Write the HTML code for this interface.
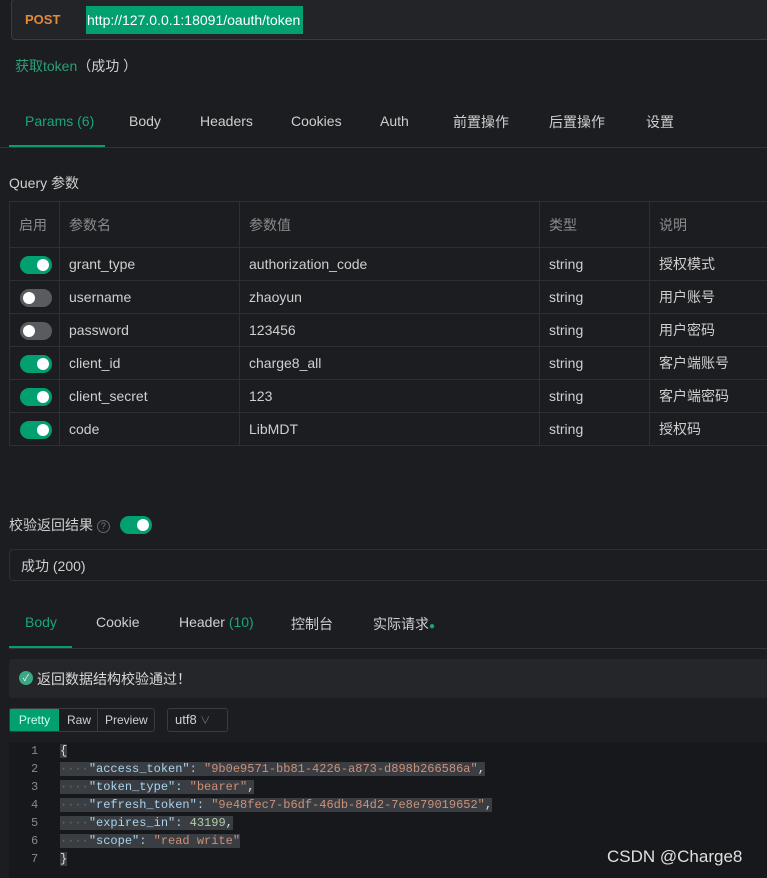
<!DOCTYPE html>
<html><head><meta charset="utf-8"><style>
*{box-sizing:border-box;margin:0;padding:0}
body{width:767px;height:878px;background:#1c1d21;color:#d0d0d0;font-family:"Liberation Sans","Noto Sans CJK SC",sans-serif;font-size:14px;position:relative;overflow:hidden}
.a{position:absolute;white-space:nowrap}
.url{left:11px;top:-1px;width:770px;height:41px;background:#232428;border:1px solid #3a3b3f;border-radius:4px}
.tog{position:absolute;width:32px;height:18px;border-radius:9px;background:#02a070}
.tog::after{content:"";position:absolute;top:3px;left:17px;width:12px;height:12px;border-radius:6px;background:#fff}
.tog.off{background:#5a5b5f}.tog.off::after{left:3px}
table{position:absolute;left:9px;top:201px;border-collapse:collapse;width:770px}
td{border:1px solid #2e2f33;height:33px;padding-left:9px;color:#cfcfcf;font-size:14px;position:relative}
tr.h td{height:46px;color:#8a8a8a}
.tab{position:absolute;top:113px;font-size:14px;color:#cfcfcf}
.code{font-family:"Liberation Mono",monospace;font-size:12px}
</style></head><body>
<div class="a url"></div>
<div class="a" style="left:25px;top:12px;color:#e08a3a;font-weight:bold;font-size:13px">POST</div>
<div class="a" style="left:86px;top:6px;height:28px;width:217px;background:#02a070;color:#fff;font-size:14px;line-height:28px;padding-left:1px">http://127.0.0.1:18091/oauth/token</div>
<div class="a" style="left:15px;top:56px;color:#2aa077">获取token<span style="color:#cfcfcf">（成功 ）</span></div>
<div class="tab" style="left:25px;color:#1aa57a">Params (6)</div>
<div class="tab" style="left:129px">Body</div>
<div class="tab" style="left:200px">Headers</div>
<div class="tab" style="left:291px">Cookies</div>
<div class="tab" style="left:380px">Auth</div>
<div class="tab" style="left:453px;top:112px">前置操作</div>
<div class="tab" style="left:549px;top:112px">后置操作</div>
<div class="tab" style="left:646px;top:112px">设置</div>
<div class="a" style="left:0;top:147px;width:767px;height:1px;background:#333438"></div>
<div class="a" style="left:9px;top:145px;width:96px;height:2px;background:#02a070"></div>
<div class="a" style="left:9px;top:173px;color:#cfcfcf">Query 参数</div>
<table>
<tr class="h"><td style="width:50px">启用</td><td style="width:180px">参数名</td><td style="width:300px">参数值</td><td style="width:110px">类型</td><td>说明</td></tr>
<tr><td><div class="tog" style="left:10px;top:8px"></div></td><td>grant_type</td><td>authorization_code</td><td>string</td><td>授权模式</td></tr>
<tr><td><div class="tog off" style="left:10px;top:8px"></div></td><td>username</td><td>zhaoyun</td><td>string</td><td>用户账号</td></tr>
<tr><td><div class="tog off" style="left:10px;top:8px"></div></td><td>password</td><td>123456</td><td>string</td><td>用户密码</td></tr>
<tr><td><div class="tog" style="left:10px;top:8px"></div></td><td>client_id</td><td>charge8_all</td><td>string</td><td>客户端账号</td></tr>
<tr><td><div class="tog" style="left:10px;top:8px"></div></td><td>client_secret</td><td>123</td><td>string</td><td>客户端密码</td></tr>
<tr><td><div class="tog" style="left:10px;top:8px"></div></td><td>code</td><td>LibMDT</td><td>string</td><td>授权码</td></tr>
</table>
<div class="a" style="left:9px;top:515px">校验返回结果 <span style="display:inline-block;width:13px;height:13px;border:1px solid #666;border-radius:7px;font-size:9px;color:#777;text-align:center;line-height:11px;vertical-align:1px">?</span></div>
<div class="tog" style="left:120px;top:516px;height:18px;width:32px"></div>
<div class="a" style="left:9px;top:549px;width:770px;height:32px;border:1px solid #2e2f33;border-radius:4px;padding:6px 11px;color:#cfcfcf">成功 (200)</div>
<div class="a" style="left:25px;top:614px;color:#1aa57a">Body</div>
<div class="a" style="left:96px;top:614px">Cookie</div>
<div class="a" style="left:179px;top:614px">Header <span style="color:#1aa57a">(10)</span></div>
<div class="a" style="left:291px;top:614px">控制台</div>
<div class="a" style="left:373px;top:614px">实际请求<span style="color:#1aa57a;font-size:10px">●</span></div>
<div class="a" style="left:9px;top:648px;width:767px;height:1px;background:#333438"></div>
<div class="a" style="left:9px;top:646px;width:63px;height:2px;background:#02a070"></div>
<div class="a" style="left:9px;top:659px;width:770px;height:39px;background:#25262a;border-radius:4px"></div>
<div class="a" style="left:19px;top:671px;width:14px;height:14px;border-radius:7px;background:#3aa884;color:#fff;font-size:9px;text-align:center;line-height:14px">✓</div>
<div class="a" style="left:37px;top:669px;color:#d8d8d8">返回数据结构校验通过！</div>
<div class="a" style="left:9px;top:708px;width:146px;height:24px;border:1px solid #3a3b3f;border-radius:3px;font-size:12px;line-height:22px">
<span style="position:absolute;left:0;top:0;width:49px;height:22px;background:#02a070;color:#cfe;text-align:center">Pretty</span>
<span style="position:absolute;left:57px">Raw</span><span style="position:absolute;left:87px;top:0;height:22px;border-left:1px solid #3a3b3f"></span><span style="position:absolute;left:95px">Preview</span></div>
<div class="a" style="left:167px;top:708px;width:61px;height:24px;border:1px solid #3a3b3f;border-radius:3px;font-size:13px;line-height:22px;padding-left:7px">utf8 <span style="color:#777;font-size:10px">∨</span></div>
<div class="a" style="left:9px;top:742px;width:770px;height:136px;background:#17181b"></div>
<div class="a code" style="left:31px;top:742px;color:#888;line-height:18px;text-align:right">1<br>2<br>3<br>4<br>5<br>6<br>7</div>
<div class="a code" style="left:60px;top:742px;line-height:18px;color:#a8d4f0">
<span style="background:#3a3d42;color:#ddd">{</span><br>
<span style="background:#3a3d42"><span style="color:#666">····</span>"access_token": <span style="color:#ce9178">"9b0e9571-bb81-4226-a873-d898b266586a"</span><span style="color:#ddd">,</span></span><br>
<span style="background:#3a3d42"><span style="color:#666">····</span>"token_type": <span style="color:#ce9178">"bearer"</span><span style="color:#ddd">,</span></span><br>
<span style="background:#3a3d42"><span style="color:#666">····</span>"refresh_token": <span style="color:#ce9178">"9e48fec7-b6df-46db-84d2-7e8e79019652"</span><span style="color:#ddd">,</span></span><br>
<span style="background:#3a3d42"><span style="color:#666">····</span>"expires_in": <span style="color:#b5cea8">43199</span><span style="color:#ddd">,</span></span><br>
<span style="background:#3a3d42"><span style="color:#666">····</span>"scope": <span style="color:#ce9178">"read write"</span></span><br>
<span style="background:#3a3d42;color:#ddd">}</span></div>
<div class="a" style="left:607px;top:847px;color:#e0e0e0;font-size:17px">CSDN @Charge8</div>
</body></html>
